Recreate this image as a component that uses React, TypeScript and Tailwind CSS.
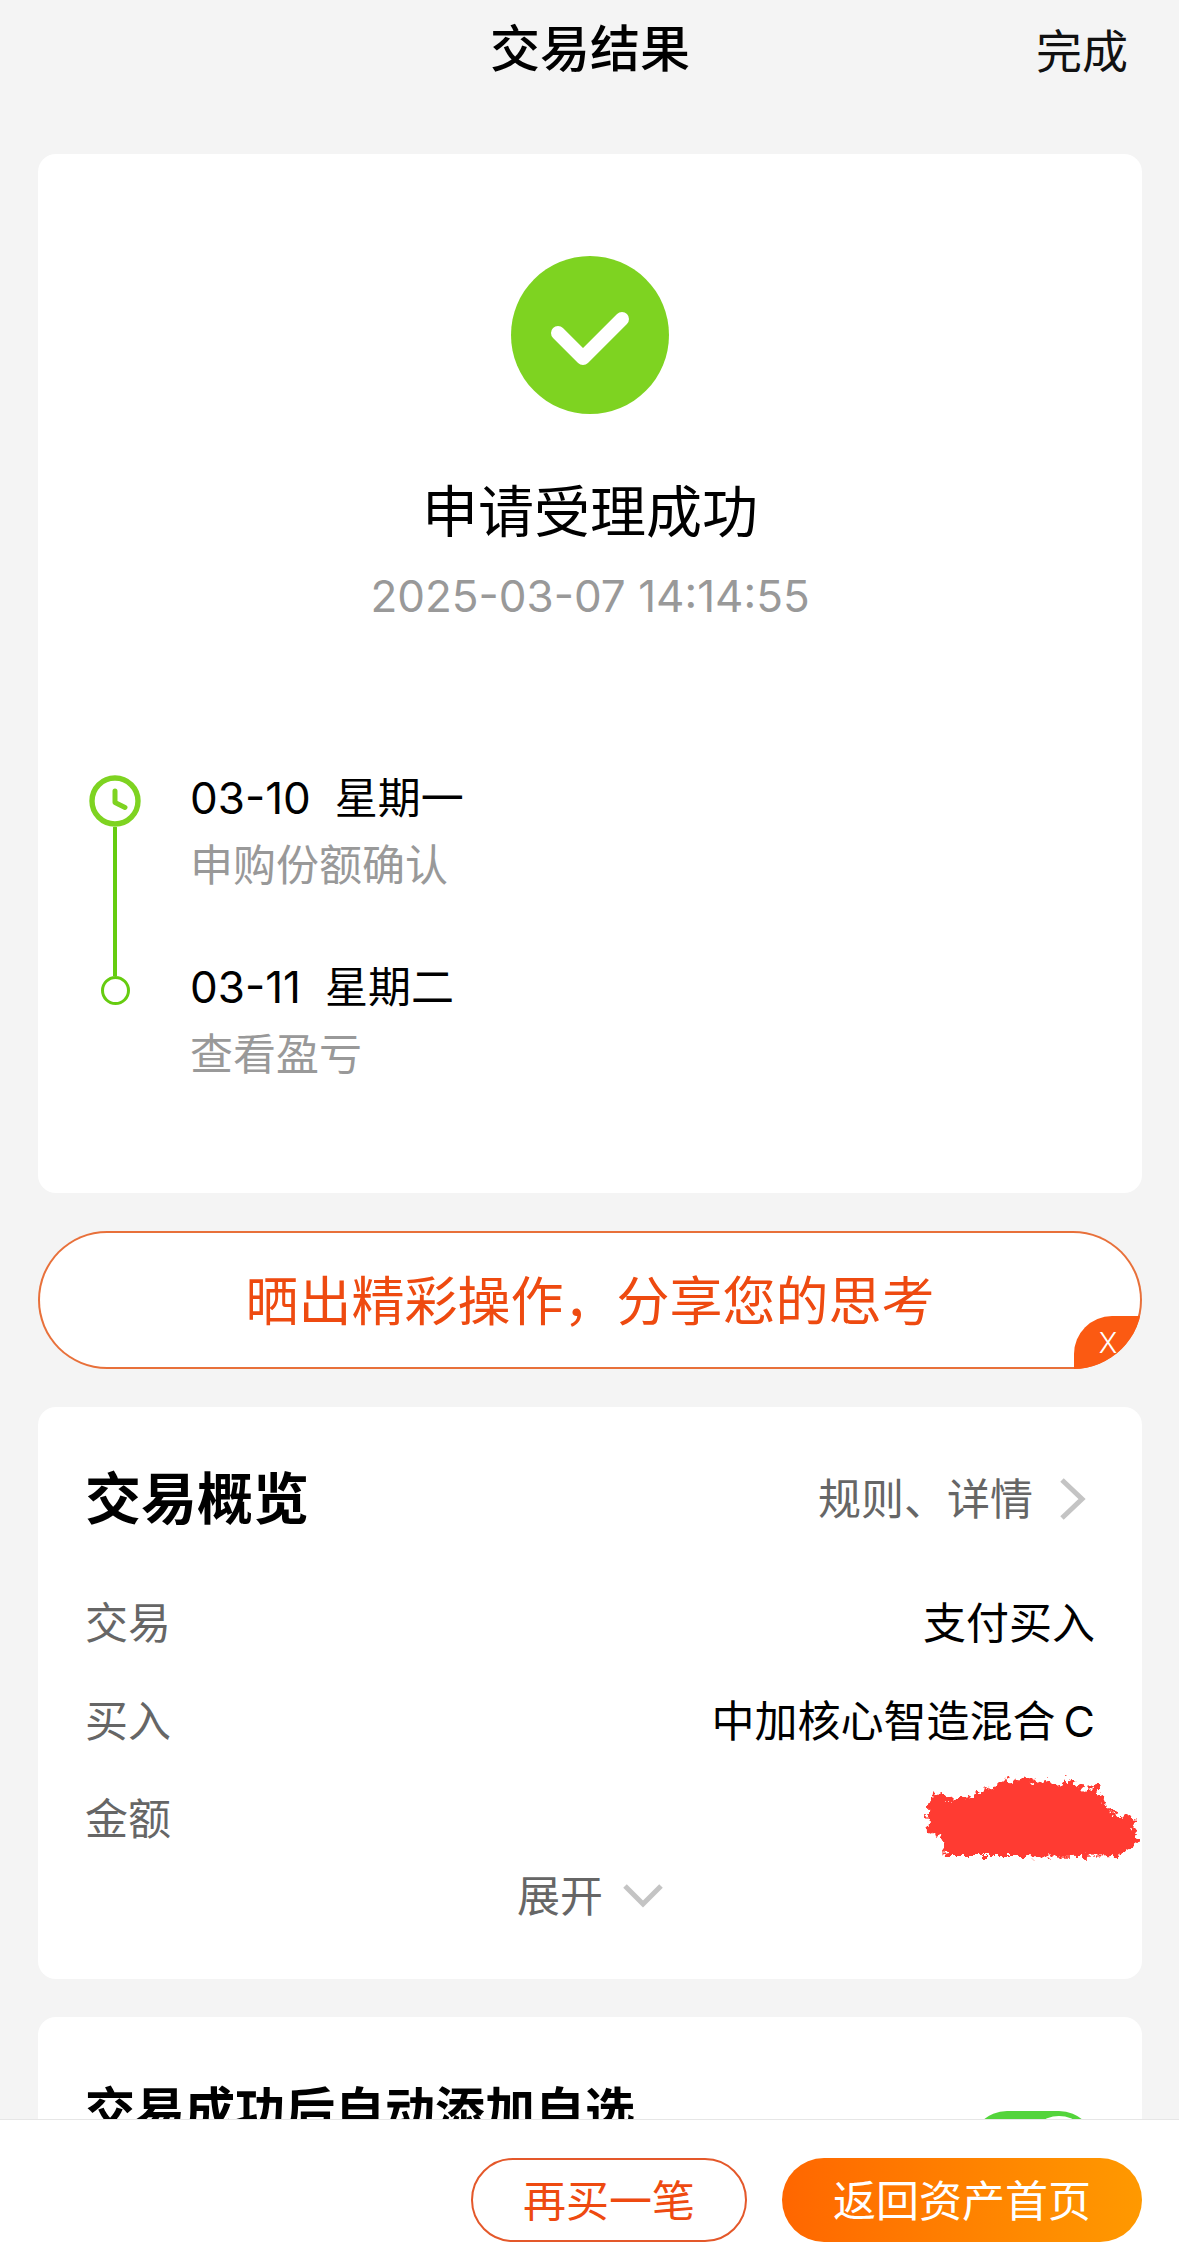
import { useState } from "react";

const steps = [
  { date: "03-10", weekday: "星期一", note: "申购份额确认" },
  { date: "03-11", weekday: "星期二", note: "查看盈亏" },
];

function SuccessIcon() {
  return (
    <svg viewBox="0 0 158 158" className="size-[158px]" aria-hidden="true">
      <circle cx="79" cy="79" r="79" fill="#7ed321" />
      <path
        d="M47 77 L72 102 L111 63"
        fill="none"
        stroke="#fff"
        strokeWidth="14"
        strokeLinecap="round"
        strokeLinejoin="round"
      />
    </svg>
  );
}

function ClockIcon() {
  return (
    <svg viewBox="0 0 52 52" className="mt-[10px] size-[52px] shrink-0" fill="none" stroke="#7ed321" aria-hidden="true">
      <circle cx="26" cy="26" r="23" strokeWidth="5.4" />
      <path d="M26 16 V27.5 L36 32.5" strokeWidth="5" strokeLinecap="round" strokeLinejoin="round" />
    </svg>
  );
}

// red marker stroke that hides the amount
function Scribble() {
  return (
    <svg viewBox="0 0 222 94" className="absolute right-[-47px] top-0 h-[94px] w-[222px]" aria-hidden="true">
      <filter id="rough" x="-5%" y="-10%" width="110%" height="120%">
        <feTurbulence type="fractalNoise" baseFrequency="0.16" numOctaves="3" seed="4" />
        <feDisplacementMap in="SourceGraphic" scale="13" xChannelSelector="R" yChannelSelector="G" />
        <feGaussianBlur stdDeviation="0.6" />
      </filter>
      <path
        filter="url(#rough)"
        fill="#ff3b30"
        d="M7 38 L12 26 L22 24 L28 29 L50 26 L63 20 L78 16 L83 7 L92 12 L107 8 L116 13 L128 10 L134 16 L144 13 L143 7 L158 14 L163 20 L177 16 L186 37 L195 43 L203 49 L208 44 L215 46 L213 60 L219 72 L197 86 L160 87 L100 86 L25 86 L22 67 L8 62 Z"
      />
    </svg>
  );
}

function Timeline() {
  return (
    <ol className="mt-[139px] px-[51px] leading-[67px]">
      {steps.map((step, i) => {
        const last = i === steps.length - 1;
        return (
          <li key={step.date} className="flex gap-[49px]">
            <div className="flex w-[52px] flex-col items-center">
              {i === 0 ? (
                <ClockIcon />
              ) : (
                <>
                  <span className="h-[22px] w-1 bg-[#66cc10]" />
                  <span className="size-[29px] rounded-full border-3 border-[#66cc10]" />
                </>
              )}
              {!last && <span className="w-1 flex-1 bg-[#66cc10]" />}
            </div>
            <div className={last ? "" : "pb-[55px]"}>
              <p className="flex gap-6 text-black">
                <span className="text-[44px]">{step.date}</span>
                <span>{step.weekday}</span>
              </p>
              <p className="text-[#999]">{step.note}</p>
            </div>
          </li>
        );
      })}
    </ol>
  );
}

function Row({ label, children }: { label: string; children: React.ReactNode }) {
  return (
    <div className="relative flex h-[98px] items-center justify-between">
      <dt className="text-[#666]">{label}</dt>
      <dd className="text-black">{children}</dd>
    </div>
  );
}

export default function App() {
  const [showShare, setShowShare] = useState(true);
  const [autoAdd, setAutoAdd] = useState(true);

  return (
    <div className="flex h-dvh flex-col bg-[#f4f4f4] font-['Inter','Noto_Sans_CJK_SC',sans-serif] text-[43px]">
      <main className="min-h-0 flex-1 overflow-y-auto pr-[37px] pl-[38px] [scrollbar-width:none]">
        <header className="grid h-[154px] grid-cols-3 items-start px-[14px] pt-[12px] leading-[74px]">
          <h1 className="col-start-2 text-center text-[50px] font-medium text-black">交易结果</h1>
          <button type="button" className="justify-self-end pt-[2px] text-[46px] text-[#111]">
            完成
          </button>
        </header>

        <section className="rounded-[18px] bg-white pt-[102px] pb-[105px]">
          <div className="flex flex-col items-center">
            <SuccessIcon />
            <h2 className="mt-[56px] text-[56px] leading-[84px] text-black">申请受理成功</h2>
            <time className="mt-[12px] text-[44px] leading-[60px] text-[#999]">2025-03-07 14:14:55</time>
          </div>
          <Timeline />
        </section>

        {showShare && (
          <div className="relative mt-[38px] overflow-hidden rounded-full bg-[#e8703a] p-[2px]">
            <a
              href="#share"
              className="block rounded-full bg-white pt-1 text-center text-[53px] leading-[130px] text-[#ee4a10]"
            >
              晒出精彩操作，分享您的思考
            </a>
            <button
              type="button"
              onClick={() => setShowShare(false)}
              className="absolute right-0 bottom-0 h-[53px] w-[68px] rounded-tl-[38px] bg-[#fb5a12] text-[28px] font-light text-white"
            >
              X
            </button>
          </div>
        )}

        <section className="mt-[38px] rounded-[18px] bg-white px-[47px] pt-[52px] pb-[55px]">
          <div className="flex items-center justify-between leading-[80px]">
            <h2 className="text-[56px] font-bold text-black">交易概览</h2>
            <a href="#rules" className="flex items-center gap-[26px] text-[#666]">
              规则、详情
              <svg viewBox="0 0 28 42" className="mr-2 h-[42px] w-[28px]" fill="none" aria-hidden="true">
                <path d="M3 2 L23 21 L3 40" stroke="#c4c4c4" strokeWidth="5" />
              </svg>
            </a>
          </div>
          <dl className="mt-[35px]">
            <Row label="交易">支付买入</Row>
            <Row label="买入">
              中加核心智造混合<span className="ml-2">C</span>
            </Row>
            <Row label="金额">
              <Scribble />
            </Row>
          </dl>
          <button type="button" className="mx-auto flex items-center gap-5 leading-[56px] text-[#666]">
            展开
            <svg viewBox="0 0 40 26" className="h-[26px] w-[40px]" fill="none" aria-hidden="true">
              <path d="M2 3 L20 21 L38 3" stroke="#c4c4c4" strokeWidth="5" />
            </svg>
          </button>
        </section>

        <section className="mt-[38px] flex items-start justify-between rounded-[18px] bg-white px-[47px] pt-[64px] pb-[60px]">
          <label htmlFor="auto-add" className="text-[50px] leading-[60px] font-bold text-black">
            交易成功后自动添加自选
          </label>
          <input
            id="auto-add"
            type="checkbox"
            checked={autoAdd}
            onChange={(e) => setAutoAdd(e.target.checked)}
            className="mt-[30px] h-[72px] w-[124px] appearance-none rounded-full bg-gray-300 p-[5px] before:block before:size-[62px] before:rounded-full before:bg-white checked:bg-[#53d43b] checked:before:ml-auto"
          />
        </section>
      </main>

      <footer className="flex justify-end gap-[35px] border-t border-[#e6e6e6] bg-white pt-[38px] pr-[37px] pb-[11px]">
        <button type="button" className="h-[84px] rounded-full border-2 border-[#e4582a] px-[50px] pt-[2px] text-[#ee4a10]">
          再买一笔
        </button>
        <button
          type="button"
          className="h-[84px] rounded-full bg-linear-to-r from-[#ff6600] to-[#ff9900] px-[51px] pt-[2px] text-white"
        >
          返回资产首页
        </button>
      </footer>
    </div>
  );
}
